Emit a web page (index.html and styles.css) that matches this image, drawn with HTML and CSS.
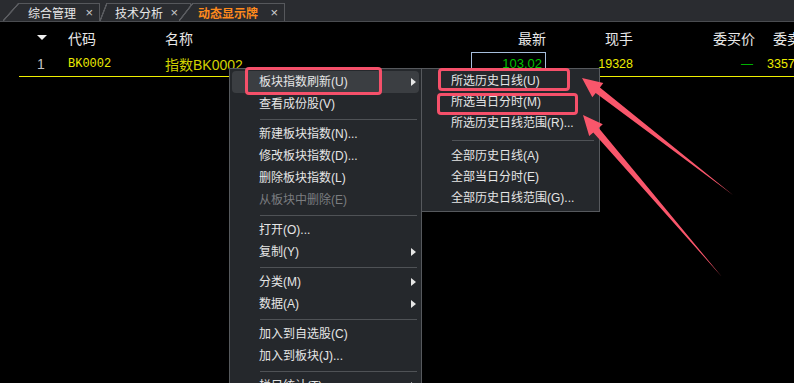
FILE: index.html
```html
<!DOCTYPE html>
<html lang="zh-CN">
<head>
  <meta charset="UTF-8">
  <title>动态显示牌</title>
  <link rel="stylesheet" href="styles.css">
</head>
<body>

<div class="tabs">
  <div class="tab t1"><span>综合管理</span><span class="close">×</span></div>
  <div class="tab t2"><span>技术分析</span><span class="close">×</span></div>
  <div class="tab t3 active"><span>动态显示牌</span><span class="close">×</span></div>
</div>

<div class="quote">
  <div class="row head">
    <div class="cell idx"><i class="sort"></i></div>
    <div class="cell code">代码</div>
    <div class="cell name">名称</div>
    <div class="cell num">最新</div>
    <div class="cell num">现手</div>
    <div class="cell num">委买价</div>
    <div class="cell last">委卖</div>
  </div>
  <div class="row data">
    <div class="cell idx">1</div>
    <div class="cell code">BK0002</div>
    <div class="cell name">指数BK0002</div>
    <div class="cell num"><span class="focus">103.02</span></div>
    <div class="cell num vol">19328</div>
    <div class="cell num dash">—</div>
    <div class="cell last vol">3357</div>
  </div>
</div>

<!-- 右键菜单 -->
<div class="menu main-menu">
  <div class="item hot more">板块指数刷新(U)</div>
  <div class="item">查看成份股(V)</div>
  <div class="sep"></div>
  <div class="item">新建板块指数(N)...</div>
  <div class="item">修改板块指数(D)...</div>
  <div class="item">删除板块指数(L)</div>
  <div class="item off">从板块中删除(E)</div>
  <div class="sep"></div>
  <div class="item">打开(O)...</div>
  <div class="item more">复制(Y)</div>
  <div class="sep"></div>
  <div class="item more">分类(M)</div>
  <div class="item more">数据(A)</div>
  <div class="sep"></div>
  <div class="item">加入到自选股(C)</div>
  <div class="item">加入到板块(J)...</div>
  <div class="sep"></div>
  <div class="item more">栏目统计(T)</div>
</div>

<div class="menu sub-menu">
  <div class="item">所选历史日线(U)</div>
  <div class="item">所选当日分时(M)</div>
  <div class="item">所选历史日线范围(R)...</div>
  <div class="sep"></div>
  <div class="item">全部历史日线(A)</div>
  <div class="item">全部当日分时(E)</div>
  <div class="item">全部历史日线范围(G)...</div>
</div>

<!-- 标注 -->
<div class="mark m1"></div>
<div class="mark m2"></div>
<div class="mark m3"></div>

<svg class="arrows" width="794" height="383" viewBox="0 0 794 383">
  <polygon points="582,78 603.3,83.1 599.9,87.4 733,195 595.7,93 592.3,97.3" />
  <polygon points="583,115 602.8,124.3 598.7,127.9 722,277 593.3,132.5 589.2,136.1" />
</svg>

</body>
</html>
```

FILE: styles.css
```css
html, body {
  margin: 0;
  height: 100%;
  overflow: hidden;
}

body {
  background-color: #000;
  font-family: "Liberation Sans", "Noto Sans CJK SC", sans-serif;
  position: relative;
}

/* Zakładki */
.tabs {
  display: flex;
  align-items: flex-end;
  height: 21px;
  background-color: #2a2c30;
  border-bottom: 1px solid #4a4c50;
}

.tab {
  position: relative;
  display: flex;
  align-items: center;
  justify-content: space-between;
  box-sizing: border-box;
  height: 18px;
  background-color: #2a2c30;
  border-top: 1px solid #56585c;
  border-right: 1px solid #56585c;
  font-size: 12px;
  color: #e8e8e8;
}

.tab::before {
  content: "";
  position: absolute;
  top: -1px;
  bottom: 0;
  background: linear-gradient(to top left, #2a2c30 calc(50% - 1px), #5a5c60 calc(50% - 0.5px), #5a5c60 calc(50% + 0.5px), transparent calc(50% + 1px));
}

.tab .close {
  color: #c8c8c8;
  font-size: 13px;
}

.t1 {
  margin-left: 19px;
  width: 81px;
  padding: 0 6px 0 9px;
  z-index: 2;
}

.t1::before {
  left: -16px;
  width: 16px;
}

.t2 {
  margin-left: 7px;
  width: 84px;
  padding: 0 12px 0 8px;
  z-index: 1;
}

.t2::before {
  left: -7px;
  width: 7px;
}

.t3 {
  margin-left: 2px;
  width: 92px;
  padding: 0 6px 0 5px;
  z-index: 3;
}

.t3::before {
  left: -14px;
  width: 14px;
}

.tab.active {
  color: #ff8a1c;
  font-weight: bold;
}

.tab.active .close {
  font-weight: normal;
  color: #d0d0d0;
}

/* Tabela notowań */
.quote {
  margin-left: 19px;
  padding-top: 2px;
}

.row {
  display: grid;
  grid-template-columns: 39px 97px 245px 147px 87px 122px 1fr;
  align-items: center;
  white-space: nowrap;
}

.row.head {
  height: 28px;
  font-size: 14px;
  color: #e8e8e8;
}

.row.data {
  height: 24px;
  border-bottom: 1px solid #f0f000;
}

.cell.idx {
  padding-left: 18px;
}

.cell.code,
.cell.name {
  padding-left: 10px;
}

.cell.num {
  text-align: right;
  padding-right: 1px;
}

.cell.last {
  padding-left: 17px;
}

.sort {
  display: inline-block;
  width: 0;
  height: 0;
  border-left: 5px solid transparent;
  border-right: 5px solid transparent;
  border-top: 5px solid #f0f0f0;
  vertical-align: middle;
  margin-bottom: 3px;
}

.data .idx {
  font-size: 14px;
  color: #c4c4c4;
}

.data .code {
  font-family: "Liberation Mono", monospace;
  font-size: 12px;
  color: #ecec00;
}

.data .name {
  font-size: 14px;
  color: #d2d200;
}

.focus {
  display: block;
  box-sizing: border-box;
  height: 24px;
  margin-left: 71px;
  padding-right: 3px;
  line-height: 22px;
  border: 1px solid #a6bedc;
  font-size: 13px;
  color: #00c000;
}

.data .vol {
  font-size: 12.5px;
  color: #ecec00;
}

.data .last {
  padding-left: 11px;
}

.data .dash {
  font-size: 12px;
  color: #00b000;
  padding-right: 3px;
}

/* Menu kontekstowe */
.menu {
  position: absolute;
  background-color: #25282c;
  border: 1px solid #56595d;
  font-size: 12px;
  color: #e6e6e6;
  padding: 2px 0;
}

.main-menu {
  left: 229px;
  top: 68px;
  width: 191px;
  height: 312px;
  padding-bottom: 0;
  border-bottom: 0;
  overflow: hidden;
}

.sub-menu {
  left: 421px;
  top: 68px;
  width: 177px;
}

.item {
  position: relative;
  height: 22px;
  line-height: 22px;
  padding-left: 29px;
  white-space: nowrap;
}

.sub-menu .item {
  height: 21px;
  line-height: 21px;
}

.item.hot {
  margin: 0 2px;
  padding-left: 27px;
  background-color: #3b3e42;
  border-radius: 4px;
}

.item.off {
  color: #7b7d80;
}

.item.more::after {
  content: "";
  position: absolute;
  right: 5px;
  top: 7px;
  border-left: 5px solid #e6e6e6;
  border-top: 4px solid transparent;
  border-bottom: 4px solid transparent;
}

.item.hot.more::after {
  right: 3px;
}

.sep {
  height: 1px;
  background-color: #4f5256;
  margin: 4px 4px 3px 30px;
}

.sub-menu .sep {
  margin: 6px 5px 5px 30px;
}

/* Zaznaczenia */
.mark {
  position: absolute;
  box-sizing: border-box;
  border: 3px solid #f5506a;
  border-radius: 4px;
}

.m1 {
  left: 245px;
  top: 67px;
  width: 137px;
  height: 28px;
}

.m2 {
  left: 438px;
  top: 68px;
  width: 132px;
  height: 23px;
}

.m3 {
  left: 437px;
  top: 93px;
  width: 141px;
  height: 22px;
}

.arrows {
  position: absolute;
  left: 0;
  top: 0;
  pointer-events: none;
}

.arrows polygon {
  fill: #f9566b;
}
```
